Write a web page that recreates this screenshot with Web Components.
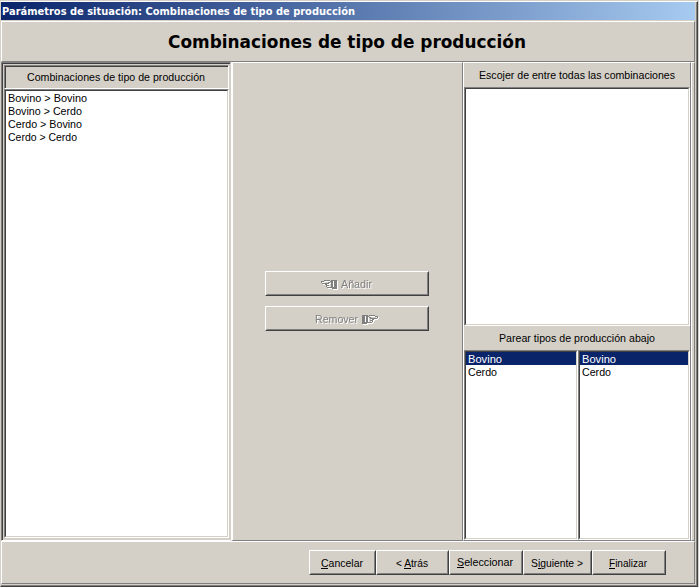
<!DOCTYPE html>
<html lang="es"><head><meta charset="utf-8"><title>Parámetros de situación</title>
<style>
html,body{margin:0;height:100%;overflow:hidden;background:#d4d0c8}
body{font:11px "Liberation Sans",sans-serif;color:#000}
</style></head><body><scenario-window></scenario-window>
<script>
const define=(name,html,setup)=>customElements.define(name,class extends HTMLElement{
  connectedCallback(){
    if(this.shadowRoot)return;
    const t=document.createElement('template');
    t.innerHTML='<style>*{box-sizing:border-box}:host{box-sizing:border-box}</style>'+html;
    this.attachShadow({mode:'open'}).append(t.content.cloneNode(true));
    if(setup)setup(this);
  }
});
/* Text fitted to a fixed width, so that labels keep the proportions of the dialog font */
define('fit-text',`<style>:host{display:inline-block;white-space:pre;line-height:13px}svg{display:block;overflow:visible}</style><svg height="13"><text y="10" fill="currentColor" lengthAdjust="spacingAndGlyphs"></text></svg>`,el=>{
  const w=el.getAttribute('w'),s=el.shadowRoot.querySelector('svg'),t=s.querySelector('text');
  const size=+(el.getAttribute('size')||11.5),h=+(el.getAttribute('h')||13);
  s.setAttribute('width',w);s.setAttribute('height',h);t.setAttribute('y',el.getAttribute('base')||10);
  t.setAttribute('textLength',w);t.style.fontSize=size+'px';t.textContent=el.getAttribute('text');
});
define('title-bar',`<style>:host{display:flex;height:18px;padding:3px 0 0 1px;color:#fff;background:linear-gradient(90deg,#0a246a,#a6caf0);font-family:"DejaVu Sans";font-weight:bold}</style><slot></slot>`);
define('page-heading',`<style>:host{display:flex;justify-content:center;height:41px;padding:10px 2px 0 0;border:1px solid;border-color:#fff #808080 #808080 #fff;font-family:"DejaVu Sans";font-weight:bold}</style><slot></slot>`);
define('list-item',`<style>:host{display:block;height:13px;padding:1px 0 0 2px}:host([selected]){background:#0a246a;color:#fff}</style><slot></slot>`);
define('list-box',`<style>:host{display:block;min-width:0;background:#fff;border:1px solid;border-color:#808080 #fff #fff #808080}div{height:100%;border:1px solid;border-color:#404040 #d4d0c8 #d4d0c8 #404040}</style><div><slot></slot></div>`);
define('push-button',`<style>:host{display:block;height:25px;border:1px solid;border-color:#fff #404040 #404040 #fff}
div{height:100%;padding:var(--top,5px) 2px 0 0;border:1px solid;border-color:transparent #808080 #808080 transparent}
span{display:flex;justify-content:center;gap:4px}
:host([disabled]) span{color:#808080;filter:drop-shadow(1px 1px 0 #fff)}</style><div><span><slot></slot></span></div>`);
define('hand-icon',`<style>:host{display:block;width:16px;height:13px}:host([right]){transform:scaleX(-1)}svg{display:block}</style>
<svg width="16" height="13" viewBox="0 0 16 13" shape-rendering="crispEdges"><path d="M3 2.5H9M0 3.5H3M0 4.5H1M1 5.5H8M4 6.5H6M5 7.5H8M5 8.5H6M6 9.5H10M7 4.5H9M9 3.5H10M10.5 2V10" fill="none" stroke="currentColor"/><path d="M11 2H16V11H11ZM12 3V9H13V3Z" fill="currentColor" fill-rule="evenodd"/></svg>`);
define('key-label',`<style>:host{display:block;height:14px}div{display:grid}i{display:block;height:1px;background:#000;margin-top:-2px}</style><div><slot></slot><i></i></div>`,el=>{
  const i=el.shadowRoot.querySelector('i');i.style.width=el.getAttribute('uw')+'px';i.style.marginLeft=(el.getAttribute('ux')||0)+'px';
});
define('source-panel',`<style>:host{display:grid;grid-template-rows:24px 1fr;padding:2px 1px 2px 2px;border:1px solid;border-color:#808080 #d4d0c8 #fff #808080;box-shadow:inset 1px 1px #404040}
header{display:flex;justify-content:center;padding:5px 2px 0 0;border:1px solid;border-color:#808080 #fff #fff #808080;box-shadow:inset 1px 1px #404040}</style>
<header><fit-text w="178" text="Combinaciones de tipo de producción"></fit-text></header>
<list-box><list-item><fit-text w="79" text="Bovino &gt; Bovino"></fit-text></list-item><list-item><fit-text w="74" text="Bovino &gt; Cerdo"></fit-text></list-item><list-item><fit-text w="74" text="Cerdo &gt; Bovino"></fit-text></list-item><list-item><fit-text w="69" text="Cerdo &gt; Cerdo"></fit-text></list-item></list-box>`);
define('transfer-panel',`<style>:host{display:flex;flex-direction:column;gap:10px;padding:208px 33px 0 32px;border:1px solid;border-left-width:2px;border-color:#fff #808080 #808080 #fff}</style>
<push-button disabled><hand-icon></hand-icon><fit-text w="31" text="Añadir"></fit-text></push-button>
<push-button disabled><fit-text w="43" text="Remover"></fit-text><hand-icon right></hand-icon></push-button>`);
define('pairing-panel',`<style>:host{display:grid;grid-template-rows:24px 239px 24px 190px;border:1px solid;border-color:#fff #808080 #808080 #fff}
header{display:flex;justify-content:center;padding-top:6px}div{display:grid;grid-template-columns:114px 112px}</style>
<header><fit-text w="196" text="Escojer de entre todas las combinaciones"></fit-text></header><list-box></list-box>
<header><fit-text w="156" text="Parear tipos de producción abajo"></fit-text></header>
<div><list-box><list-item selected><fit-text w="34" text="Bovino"></fit-text></list-item><list-item><fit-text w="29" text="Cerdo"></fit-text></list-item></list-box><list-box><list-item selected><fit-text w="34" text="Bovino"></fit-text></list-item><list-item><fit-text w="29" text="Cerdo"></fit-text></list-item></list-box></div>`);
define('edge-strip',`<style>:host{display:block;border:1px solid;border-color:#fff #808080 #808080 #fff}</style>`);
define('wizard-bar',`<style>:host{display:grid;grid-template-columns:67px 73px 74px 69px 74px;justify-content:end;padding:8px 28px 0 0;border:1px solid;border-color:#fff #808080 #808080 #fff}.up{--top:4px}</style>
<push-button><key-label uw="7"><fit-text w="42" text="Cancelar"></fit-text></key-label></push-button>
<push-button><key-label uw="7" ux="8"><fit-text w="32" text="&lt; Atrás"></fit-text></key-label></push-button>
<push-button class="up"><key-label uw="7"><fit-text w="56" text="Seleccionar"></fit-text></key-label></push-button>
<push-button><key-label uw="3" ux="7"><fit-text w="52" text="Siguiente &gt;"></fit-text></key-label></push-button>
<push-button><key-label uw="6"><fit-text w="38" text="Finalizar"></fit-text></key-label></push-button>`);
define('scenario-window',`<style>:host{display:block;width:699px;height:587px;padding:1px 1px 0 0;background:#d4d0c8}
.frame{height:586px;border:1px solid;border-color:#fff #404040 #404040 #d4d0c8;box-shadow:inset -1px -1px #808080;padding-right:2px}
main{display:grid;grid-template-columns:230px 232px 228px 1fr;height:479px}title-bar{margin-bottom:1px}wizard-bar{height:43px}transfer-panel,pairing-panel{height:479px}</style>
<div class="frame"><title-bar><fit-text w="353" size="11" text="Parámetros de situación: Combinaciones de tipo de producción"></fit-text></title-bar>
<page-heading><fit-text w="358" size="18" h="22" base="16" text="Combinaciones de tipo de producción"></fit-text></page-heading>
<main><source-panel></source-panel><transfer-panel></transfer-panel><pairing-panel></pairing-panel><edge-strip></edge-strip></main><wizard-bar></wizard-bar></div>`);
</script></body></html>
